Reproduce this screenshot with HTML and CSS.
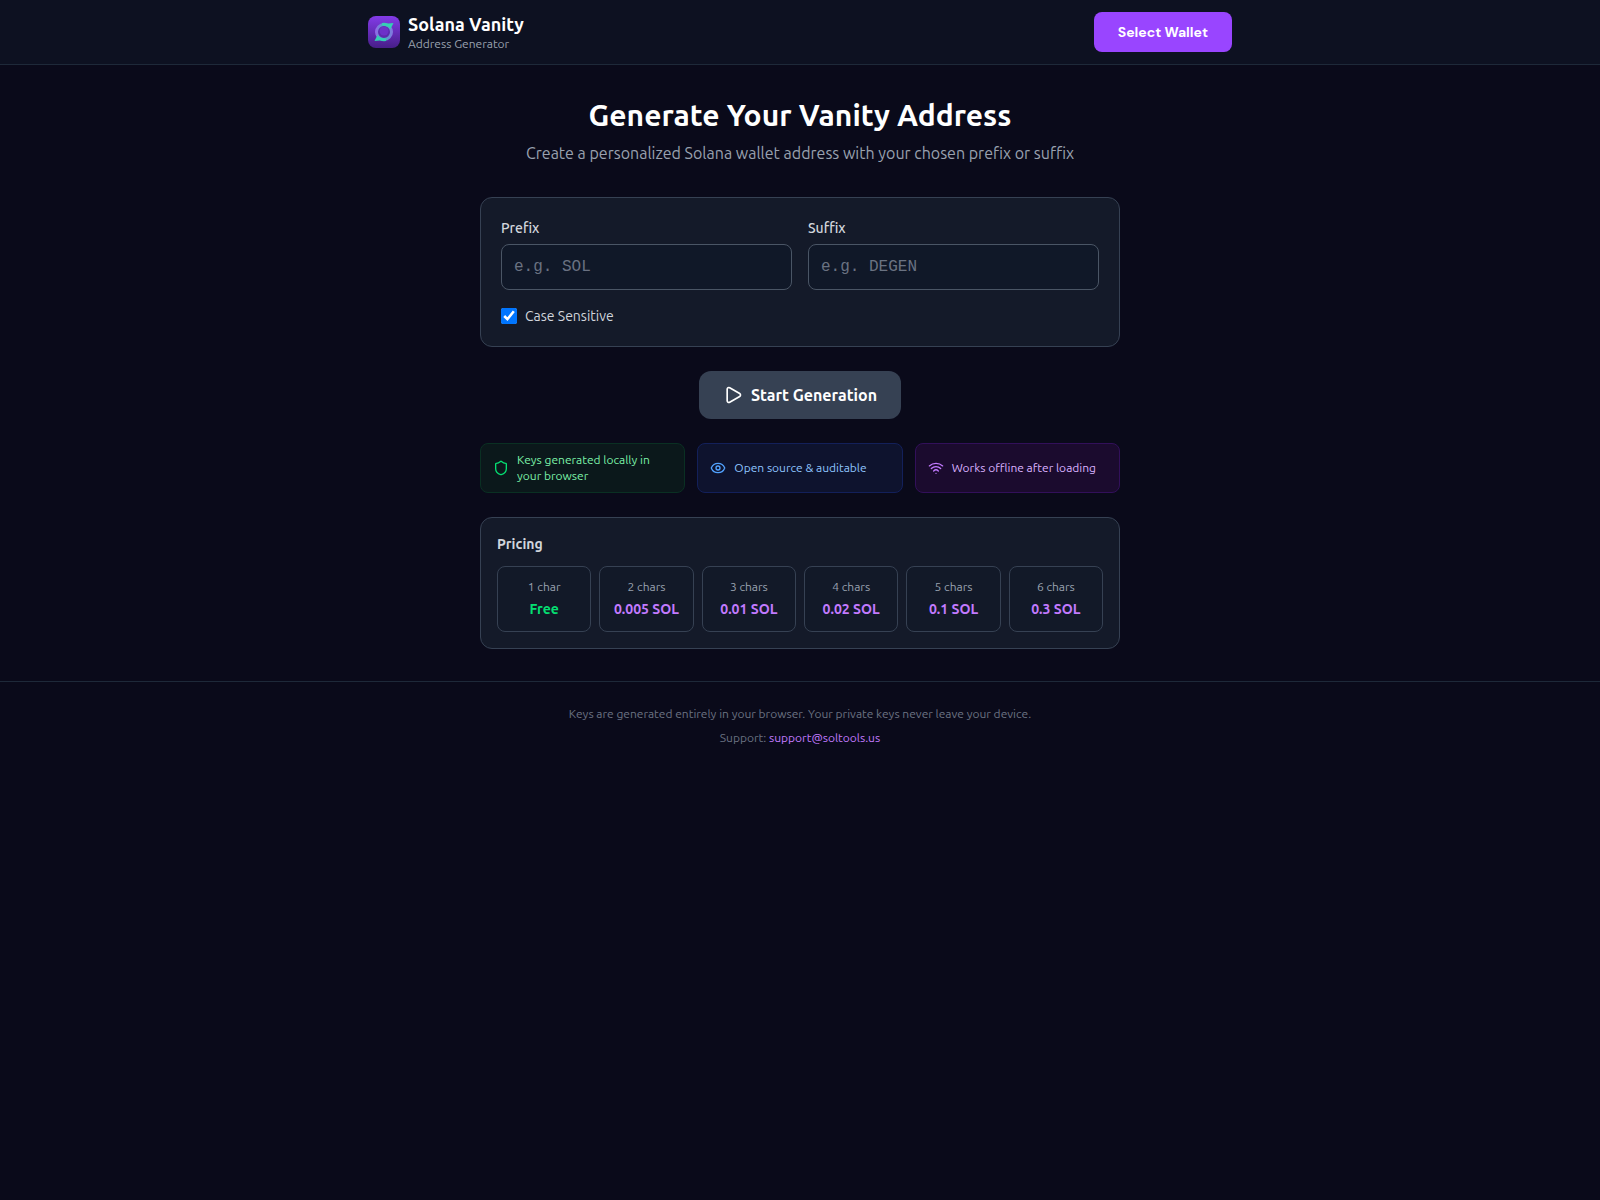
FILE: index.html
```html
<!DOCTYPE html>
<html lang="en">
<head>
    <meta charset="UTF-8">
    <meta name="viewport" content="width=device-width, initial-scale=1.0">
    <title>Solana Vanity Address Generator</title>
    <link rel="stylesheet" href="styles.css">
</head>
<body>
    <header class="site-header">
        <div class="header-inner">
            <div class="brand">
                <svg class="logo" viewBox="0 0 32 32" aria-hidden="true">
                    <defs>
                        <linearGradient id="logoBg" x1="0" y1="0" x2="0" y2="1">
                            <stop offset="0" stop-color="#833be8"/>
                            <stop offset="1" stop-color="#471e88"/>
                        </linearGradient>
                        <linearGradient id="logoRing" x1="0" y1="0" x2="1" y2="0">
                            <stop offset="0" stop-color="#8f6be6"/>
                            <stop offset="0.5" stop-color="#45b0c0"/>
                            <stop offset="1" stop-color="#7f7ade"/>
                        </linearGradient>
                    </defs>
                    <rect width="32" height="32" rx="8" fill="url(#logoBg)"/>
                    <circle cx="16" cy="16" r="7.5" fill="#5c2aae" stroke="url(#logoRing)" stroke-width="3"/>
                    <circle cx="16" cy="15" r="4.5" fill="#6d31c8"/>
                    <path d="M14 7Q17 6.500 20 7.500L25.500 7L22.500 13Q20 9.500 14 9.500Z" fill="#35cfb4"/>
                    <path d="M18 25Q15 25.500 12 24.500L6.500 25L9.500 19Q12 22.500 18 22.500Z" fill="#35cfb4"/>
                </svg>
                <div>
                    <div class="brand-name">Solana Vanity</div>
                    <div class="brand-sub">Address Generator</div>
                </div>
            </div>
            <button type="button" class="wallet-button">Select Wallet</button>
        </div>
    </header>

    <main class="container">
        <div class="intro">
            <h1>Generate Your Vanity Address</h1>
            <p>Create a personalized Solana wallet address with your chosen prefix or suffix</p>
        </div>

        <form class="card options">
            <div class="fields">
                <div class="form-group">
                    <label for="prefix">Prefix</label>
                    <input type="text" id="prefix" name="prefix" placeholder="e.g. SOL">
                </div>
                <div class="form-group">
                    <label for="suffix">Suffix</label>
                    <input type="text" id="suffix" name="suffix" placeholder="e.g. DEGEN">
                </div>
            </div>
            <label class="checkbox">
                <input type="checkbox" name="caseSensitive" checked>
                Case Sensitive
            </label>
        </form>

        <button type="button" class="start-button">
            <svg class="icon icon-play" viewBox="0 0 24 24" aria-hidden="true">
                <path d="M5 5a2 2 0 0 1 3.008-1.728l11.997 6.998a2 2 0 0 1 .003 3.458l-12 7A2 2 0 0 1 5 19z"/>
            </svg>
            Start Generation
        </button>

        <div class="features">
            <div class="feature green">
                <svg class="icon" viewBox="0 0 24 24" aria-hidden="true">
                    <path d="M20 13c0 5-3.500 7.500-7.660 8.950a1 1 0 0 1-.67-.01C7.500 20.500 4 18 4 13V6a1 1 0 0 1 1-1c2 0 4.500-1.200 6.240-2.720a1.170 1.170 0 0 1 1.520 0C14.510 3.810 17 5 19 5a1 1 0 0 1 1 1z"/>
                </svg>
                <span>Keys generated locally in your browser</span>
            </div>
            <div class="feature blue">
                <svg class="icon" viewBox="0 0 24 24" aria-hidden="true">
                    <path d="M2.060 12.350a1 1 0 0 1 0-.7 10.750 10.750 0 0 1 19.880 0 1 1 0 0 1 0 .7 10.750 10.750 0 0 1-19.880 0"/>
                    <circle cx="12" cy="12" r="3"/>
                </svg>
                <span>Open source &amp; auditable</span>
            </div>
            <div class="feature purple">
                <svg class="icon" viewBox="0 0 24 24" aria-hidden="true">
                    <path d="M12 20h.01"/>
                    <path d="M2 8.820a15 15 0 0 1 20 0"/>
                    <path d="M5 12.859a10 10 0 0 1 14 0"/>
                    <path d="M8.500 16.429a5 5 0 0 1 7 0"/>
                </svg>
                <span>Works offline after loading</span>
            </div>
        </div>

        <section class="card pricing">
            <h2>Pricing</h2>
            <div class="price-grid">
                <div class="price-box">
                    <div class="chars">1 char</div>
                    <div class="price free">Free</div>
                </div>
                <div class="price-box">
                    <div class="chars">2 chars</div>
                    <div class="price">0.005 SOL</div>
                </div>
                <div class="price-box">
                    <div class="chars">3 chars</div>
                    <div class="price">0.01 SOL</div>
                </div>
                <div class="price-box">
                    <div class="chars">4 chars</div>
                    <div class="price">0.02 SOL</div>
                </div>
                <div class="price-box">
                    <div class="chars">5 chars</div>
                    <div class="price">0.1 SOL</div>
                </div>
                <div class="price-box">
                    <div class="chars">6 chars</div>
                    <div class="price">0.3 SOL</div>
                </div>
            </div>
        </section>
    </main>

    <footer class="site-footer">
        <p>Keys are generated entirely in your browser. Your private keys never leave your device.</p>
        <p>Support: <a href="mailto:support@soltools.us">support@soltools.us</a></p>
    </footer>
</body>
</html>
```
FILE: styles.css
```css
/* Base styles */
:root {
    --bg: #0a0a1a;
    --header: #0d1121;
    --card: #141a29;
    --line: #1e2939;
    --border: #364153;
    --text: #d1d5dc;
    --muted: #99a1af;
    --dim: #6a7282;
    --purple: #c27aff;
    --green: #05df72;
}

* {
    box-sizing: border-box;
}

body {
    font-family: Ubuntu, "Noto Sans", sans-serif;
    font-size: 16px;
    line-height: 24px;
    margin: 0;
    min-height: 100vh;
    background: var(--bg);
    color: white;
}

h1, h2, p {
    margin: 0;
}

button,
input {
    font-family: inherit;
}

button {
    border: none;
    color: white;
    cursor: pointer;
}

/* Header */
.site-header {
    background: var(--header);
    border-bottom: 1px solid var(--line);
}

.header-inner {
    max-width: 896px;
    margin: 0 auto;
    padding: 12px 16px;
    display: flex;
    align-items: center;
    justify-content: space-between;
}

.brand {
    display: flex;
    align-items: center;
    gap: 8px;
}

.logo {
    width: 32px;
    height: 32px;
}

.brand-name {
    font-size: 18px;
    line-height: 24px;
    font-weight: 600;
}

.brand-sub {
    font-size: 12px;
    line-height: 16px;
    color: var(--muted);
}

.wallet-button {
    height: 40px;
    padding: 0 24px;
    border-radius: 8px;
    background: #9945ff;
    font-family: "DM Sans", Inter, sans-serif;
    font-size: 14px;
    font-weight: 700;
}

/* Main */
.container {
    max-width: 672px;
    margin: 0 auto;
    padding: 32px 16px;
}

.intro {
    text-align: center;
    margin-bottom: 32px;
}

h1 {
    font-size: 30px;
    line-height: 36px;
    font-weight: 600;
    margin-bottom: 8px;
}

.intro p {
    color: var(--muted);
}

.card {
    background: var(--card);
    border: 1px solid var(--border);
    border-radius: 12px;
}

.options {
    padding: 20px;
}

.fields {
    display: grid;
    grid-template-columns: 1fr 1fr;
    gap: 16px;
    margin-bottom: 16px;
}

label {
    display: block;
    font-size: 14px;
    line-height: 20px;
    color: var(--text);
}

.form-group label {
    font-weight: 500;
    margin-bottom: 6px;
}

input[type="text"] {
    display: block;
    width: 100%;
    height: 46px;
    padding: 0 12px;
    border: 1px solid #4a5565;
    border-radius: 8px;
    background: #101828;
    color: white;
    font-family: "Liberation Mono", monospace;
    font-size: 16px;
}

input::placeholder {
    color: var(--dim);
}

.checkbox {
    display: flex;
    align-items: center;
    gap: 8px;
}

.checkbox input {
    width: 16px;
    height: 16px;
    margin: 0;
}

.start-button {
    display: flex;
    align-items: center;
    gap: 8px;
    height: 48px;
    margin: 24px auto;
    padding: 0 24px;
    border-radius: 12px;
    background: var(--border);
    font-size: 16px;
    font-weight: 600;
}

.icon {
    flex: none;
    width: 16px;
    height: 16px;
    fill: none;
    stroke: currentColor;
    stroke-width: 2;
    stroke-linecap: round;
    stroke-linejoin: round;
}

.icon-play {
    width: 20px;
    height: 20px;
}

/* Features */
.features {
    display: grid;
    grid-template-columns: repeat(3, 1fr);
    gap: 12px;
    margin-bottom: 24px;
}

.feature {
    display: flex;
    align-items: center;
    gap: 8px;
    padding: 8px 12px;
    border: 1px solid;
    border-radius: 8px;
    font-size: 12px;
    line-height: 16px;
}

.green {
    background: #0b181b;
    border-color: #0a3023;
    color: #7bf1a8;
}

.green .icon {
    color: var(--green);
}

.blue {
    background: #0e132e;
    border-color: #13205a;
    color: #8ec5ff;
}

.blue .icon {
    color: #51a2ff;
}

.purple {
    background: #1b0b2e;
    border-color: #32105a;
    color: #dab2ff;
}

.purple .icon {
    color: var(--purple);
}

/* Pricing */
.pricing {
    padding: 16px;
}

h2 {
    font-size: 14px;
    line-height: 20px;
    font-weight: 600;
    color: var(--text);
    margin-bottom: 12px;
}

.price-grid {
    display: grid;
    grid-template-columns: repeat(6, 1fr);
    gap: 8px;
}

.price-box {
    padding: 12px 8px;
    border: 1px solid var(--border);
    border-radius: 8px;
    background: #121928;
    text-align: center;
}

.chars {
    font-size: 12px;
    line-height: 16px;
    color: var(--muted);
    margin-bottom: 4px;
}

.price {
    font-size: 14px;
    line-height: 20px;
    font-weight: 600;
    color: var(--purple);
    white-space: nowrap;
}

.free {
    color: var(--green);
}

/* Footer */
.site-footer {
    border-top: 1px solid var(--line);
    padding: 24px 16px;
    display: grid;
    gap: 8px;
    text-align: center;
    font-size: 12px;
    line-height: 16px;
    color: var(--dim);
}

.site-footer a {
    color: var(--purple);
    text-decoration: none;
}
```
